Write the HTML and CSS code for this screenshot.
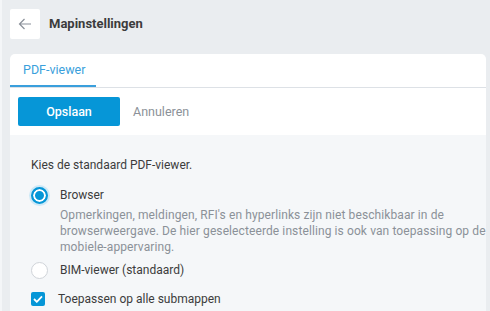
FILE: index.html
```html
<!DOCTYPE html>
<html lang="nl">
<head>
  <meta charset="UTF-8">
  <title>Mapinstellingen</title>
  <link rel="stylesheet" href="styles.css">
</head>
<body>
  <header class="page-header">
    <button class="back-button" aria-label="Terug">
      <svg width="14" height="14" viewBox="0 0 14 14" fill="none" stroke="#8a9099" stroke-width="1.2">
        <path d="M13 7H1.5M6.5 2L1.5 7l5 5"/>
      </svg>
    </button>
    <h1>Mapinstellingen</h1>
  </header>

  <div class="card">
    <!-- Tabs -->
    <div class="tabs">
      <div class="tab active">PDF-viewer</div>
    </div>

    <!-- Toolbar -->
    <div class="toolbar">
      <button class="primary-button">Opslaan</button>
      <button class="link-button">Annuleren</button>
    </div>

    <!-- Settings -->
    <div class="content">
      <p class="intro">Kies de standaard PDF-viewer.</p>

      <label class="radio-row">
        <input type="radio" name="viewer" checked>
        <span class="radio"></span>
        <span class="radio-text">
          <span class="radio-label">Browser</span>
          <span class="radio-help">Opmerkingen, meldingen, RFI's en hyperlinks zijn niet beschikbaar in de browserweergave. De hier geselecteerde instelling is ook van toepassing op de mobiele-appervaring.</span>
        </span>
      </label>

      <label class="radio-row">
        <input type="radio" name="viewer">
        <span class="radio"></span>
        <span class="radio-text">
          <span class="radio-label">BIM-viewer (standaard)</span>
        </span>
      </label>

      <label class="check-row">
        <input type="checkbox" checked>
        <span class="checkbox">
          <svg width="10" height="8" viewBox="0 0 10 8" fill="none" stroke="#fff" stroke-width="1.8">
            <path d="M1 4l2.8 2.8L9 1.3"/>
          </svg>
        </span>
        <span class="check-label">Toepassen op alle submappen</span>
      </label>
    </div>
  </div>
</body>
</html>
```

FILE: styles.css
```css
:root {
  --bg: #eaedf0;
  --panel: #f5f7f9;
  --blue: #0696d7;
  --tab-blue: #3a9fdc;
  --text: #3c3c3c;
  --muted: #8b9198;
  --border: #dde1e6;
}

* {
  box-sizing: border-box;
}

body {
  margin: 0;
  height: 311px;
  overflow: hidden;
  background-color: var(--bg);
  border-left: 2px solid #f4f6f8;
  font-family: 'Roboto', 'Noto Sans', sans-serif;
  font-size: 12px;
  color: var(--text);
}

/* Header */
.page-header {
  display: flex;
  align-items: flex-start;
  gap: 9px;
  padding: 9px 0 0 8px;
  height: 54px;
}

.back-button {
  width: 30px;
  height: 30px;
  padding: 0;
  border: none;
  border-radius: 2px;
  background-color: white;
  display: flex;
  align-items: center;
  justify-content: center;
  cursor: pointer;
}

h1 {
  margin: 0;
  font-size: 13px;
  font-weight: 700;
  line-height: 30px;
  color: #3c3c3c;
}

/* Card */
.card {
  margin-left: 8px;
  width: 476px;
  height: 257px;
  background-color: white;
  border-radius: 5px 5px 0 0;
  overflow: hidden;
  display: flex;
  flex-direction: column;
}

.tabs {
  display: flex;
  height: 34px;
  border-bottom: 1px solid var(--border);
}

.tab {
  padding: 0 13px;
  width: 86px;
  white-space: nowrap;
  line-height: 32px;
  font-size: 12.5px;
  color: var(--tab-blue);
  border-bottom: 2px solid var(--tab-blue);
}

.toolbar {
  display: flex;
  align-items: center;
  gap: 13px;
  height: 47px;
  padding: 0 8px;
}

.primary-button {
  width: 102px;
  height: 29px;
  border: none;
  border-radius: 2px;
  background-color: var(--blue);
  color: white;
  font-family: inherit;
  font-size: 12.5px;
  font-weight: 500;
}

.link-button {
  border: none;
  background: none;
  padding: 0;
  font-family: inherit;
  font-size: 12.5px;
  color: var(--muted);
}

.content {
  flex: 1;
  background-color: var(--panel);
  padding: 22px 0 0 21px;
}

.intro {
  margin: 0 0 14px;
  line-height: 16px;
}

/* Radios */
.radio-row {
  display: flex;
  gap: 12px;
  margin-bottom: 7px;
}

.radio-row input,
.check-row input {
  display: none;
}

.radio {
  flex: none;
  width: 17px;
  height: 17px;
  border-radius: 50%;
  background-color: white;
  border: 1px solid #d0d4d9;
}

.radio-row input:checked + .radio {
  border: 2px solid var(--blue);
  background-color: var(--blue);
  box-shadow: inset 0 0 0 2px white, 0 0 0 2px #cde9f7;
}

.radio-text {
  flex: 1;
  display: flex;
  flex-direction: column;
}

.radio-label {
  line-height: 17px;
}

.radio-help {
  margin-top: 3px;
  line-height: 16px;
  letter-spacing: 0.1px;
  color: var(--muted);
}

/* Checkbox */
.check-row {
  display: flex;
  align-items: center;
  gap: 13px;
  margin-top: 13px;
}

.checkbox {
  width: 14px;
  height: 14px;
  border-radius: 2px;
  background-color: var(--blue);
  display: flex;
  align-items: center;
  justify-content: center;
}
```
